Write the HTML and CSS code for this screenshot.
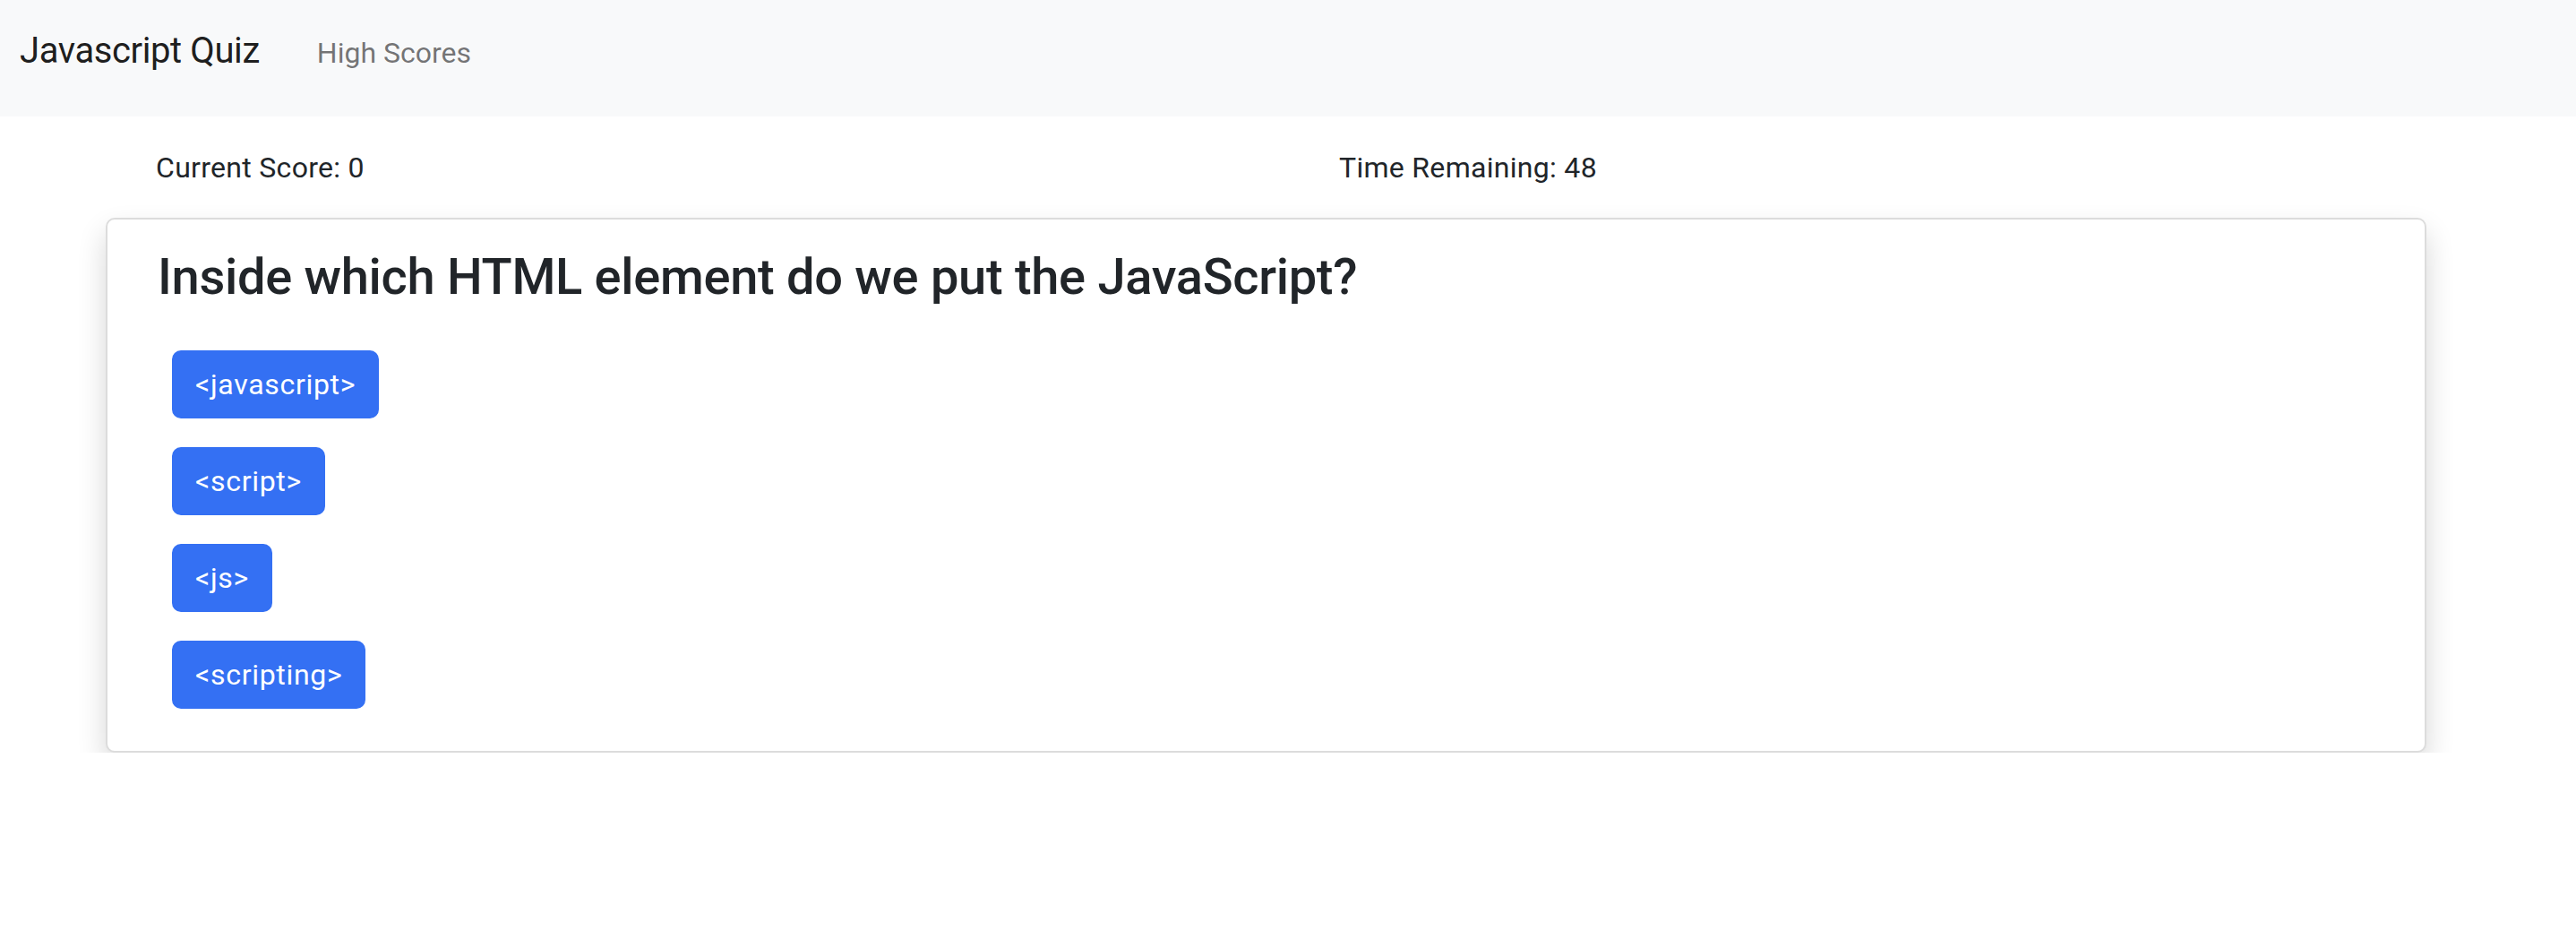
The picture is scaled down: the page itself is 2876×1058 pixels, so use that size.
FILE: index.html
```html
<!DOCTYPE html>
<html lang="en">
<head>
<meta charset="utf-8">
<title>Javascript Quiz</title>
<link rel="stylesheet" href="styles.css">
</head>
<body>
<nav class="navbar">
  <a class="brand" href="#">Javascript Quiz</a>
  <a class="nav-link" href="#">High Scores</a>
</nav>
<div class="stats">
  <div class="stat">Current Score: 0</div>
  <div class="stat">Time Remaining: 48</div>
</div>
<div class="card">
  <h3 class="question">Inside which HTML element do we put the JavaScript?</h3>
  <div class="answers">
    <button class="btn">&lt;javascript&gt;</button>
    <button class="btn">&lt;script&gt;</button>
    <button class="btn">&lt;js&gt;</button>
    <button class="btn">&lt;scripting&gt;</button>
  </div>
</div>
</body>
</html>
```
FILE: styles.css
```css
* { box-sizing: border-box; }
body {
  margin: 0;
  font-family: "Roboto", "Liberation Sans", sans-serif;
  color: #212529;
  background: #fff;
}
.navbar {
  height: 130px;
  background: #f8f9fa;
  display: flex;
  align-items: baseline;
  padding: 37px 0 0 22px;
}
.brand {
  font-size: 40px;
  line-height: 40px;
  letter-spacing: -0.4px;
  color: rgba(0,0,0,.9);
  text-decoration: none;
  margin-right: 64px;
}
.nav-link {
  font-size: 32px;
  line-height: 40px;
  color: rgba(0,0,0,.55);
  text-decoration: none;
}
.stats {
  display: grid;
  grid-template-columns: 1321px 1fr;
  padding: 33px 0 0 174px;
  font-size: 32px;
  line-height: 48px;
  letter-spacing: 0.3px;
}
.card {
  margin: 32px 0 0 118px;
  width: 2591px;
  border: 2px solid #dcdcdc;
  border-radius: 10px;
  box-shadow: 0 16px 32px rgba(0,0,0,.16);
  padding: 31px 32px 47px 56px;
  background: #fff;
}
.question {
  margin: 0;
  font-size: 56px;
  font-weight: 500;
  line-height: 1.2;
  letter-spacing: -0.3px;
}
.answers {
  display: flex;
  flex-direction: column;
  align-items: flex-start;
  gap: 32px;
  padding: 48px 0 0 16px;
}
.btn {
  font-family: inherit;
  font-size: 32px;
  line-height: 48px;
  letter-spacing: 0.7px;
  padding: 12px 24px;
  color: #fff;
  background: #3470f3;
  border: 2px solid #3470f3;
  border-radius: 10px;
  cursor: pointer;
}
```
